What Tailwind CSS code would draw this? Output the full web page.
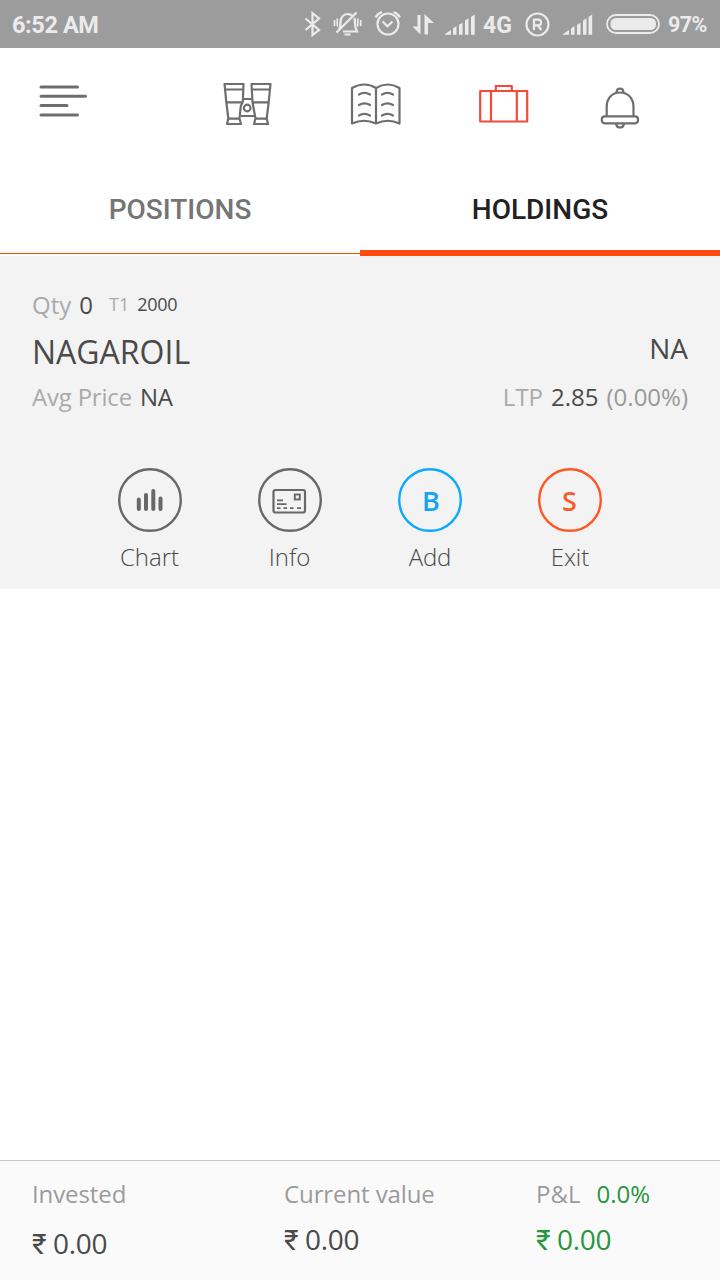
<!DOCTYPE html>
<html lang="en">
<head>
<meta charset="utf-8">
<title>Holdings</title>
<script src="https://cdn.jsdelivr.net/npm/@tailwindcss/browser@4"></script>
</head>
<body class="flex h-[1280px] w-[720px] flex-col overflow-hidden bg-white font-['Open_Sans','Noto_Sans',sans-serif] text-[#4a4a4a]">

<!-- Status bar -->
<header class="flex h-12 shrink-0 items-center justify-between bg-[#9c9c9c] pr-3 pl-3 font-[Roboto,sans-serif] font-bold text-[#ebebeb]">
  <span class="pt-1 text-[23.5px] leading-none tracking-[-0.4px] whitespace-nowrap">6:52 AM</span>
  <svg class="-mr-3 h-12 w-[430px]" viewBox="290 0 430 48" fill="none" stroke="#ebebeb" stroke-width="2.200">
    <path d="M305.500 18.500 319 30l-6.500 5V13l6.500 5.500-13.500 11.500"/>
    <path d="M336.500 32.500 356.500 12.500M339 29.500c1.500-2 1.500-4 1.500-7 0-5 3-8.500 7-8.500 2 0 3.500.6 4.800 1.800M354.300 18c.6 1.500.7 3 .7 5 0 4 .3 5.500 2 8.500h-14M344.500 34.500h6"/>
    <path d="M334.500 20v6M337.300 18.500v8M357.800 18.500v8M360.700 20v6" stroke-width="1.700"/>
    <circle cx="388" cy="24" r="10.500"/>
    <path d="m382.500 21.500 5 4.700 5-4.700"/>
    <path d="M375.500 17.500q2-4 6.500-5.500M400 17.500q-2-4-6.500-5.500"/>
    <path fill="#ebebeb" stroke="none" d="M417.500 15h3v19.500L412.500 26.500h5zM424.500 34.500V14l9.500 9h-6v11.500z"/>
    <path fill="#ebebeb" stroke="none" d="M445 34.700v-.7l6-4v4.700zM453 28.500l3.500-2.500v8.700H453zM459 24.700l3.500-2v12H459zM465 20.500l3.500-2.200v16.400H465zM471 17l3.700-2.500v20.200H471z"/>
    <text x="483" y="33" fill="#ebebeb" stroke="none" font-size="23">4G</text>
    <circle cx="537.500" cy="24.500" r="11"/>
    <path d="M534 30V19.700h4.500q2.500 0 2.500 2.800t-2.500 2.800H534M538 25.500l3.300 4.500"/>
    <path fill="#ebebeb" stroke="none" d="M563 34.700v-.7l6-4v4.700zM571 28.500l3.500-2.500v8.700H571zM577 24.700l3.500-2v12H577zM583 20.500l3.500-2.200v16.400H583zM588.500 17l3.700-2.500v20.200h-3.700z"/>
    <rect x="607" y="15" width="52" height="18" rx="9" stroke-width="1.800"/>
    <rect x="610.500" y="18" width="45.500" height="12" rx="5.500" fill="#ebebeb" stroke="none"/>
    <text x="668" y="32" fill="#ebebeb" stroke="none" font-size="21.500" textLength="39.500">97%</text>
  </svg>
</header>

<!-- Navigation -->
<nav class="h-[112px] shrink-0">
  <svg class="block h-[112px] w-[720px]" viewBox="0 48 720 112" fill="none" stroke="#6e6e6e" stroke-width="2.200" stroke-linejoin="round">
    <path stroke-width="3" stroke-linecap="round" d="M41 87h36.500M41 96.300h44.500M41 105.600h26M41 115h36.500"/>
    <path d="M224.500 84h19l-.7 18-2 4-1.300 12.500 1.500 5.500h-14l1.300-5.500-2-16.500zM224.500 89.500h19M226 102.300h16.500M228.500 118.700h11"/>
    <path d="M251.500 84h19l-1.800 18-2 16.500L268 124h-14l1.500-5.500L252.500 102zM251.500 89.500h19M252.500 102.300h16.500M255.500 118.700h11M243 99h9M241 116h13.500"/>
    <circle cx="247.200" cy="108" r="3.300"/>
    <path d="M376 88q-11.500-7-24 0v35.500q12-5.500 24 0 12-5.500 23.500 0V88q-12-7-23.500 0v35.500"/>
    <path stroke-linecap="round" d="M359 94.500q5.500-3.200 11 0M359 105q5.500-3.200 11 0M359 115.500q5.500-3.200 11 0M382 94.500q5.500-3.200 11 0M382 105q5.500-3.200 11 0M382 115.500q5.500-3.200 11 0"/>
    <path stroke="#f44a3c" d="M480.200 91h47v30.500h-47zM491 91v30.500M516.800 91v30.500M495.800 91v-5h16v5"/>
    <path d="M606.700 116v-9c0-8.500 5.300-14.500 13.300-14.500s13.500 6 13.500 14.500v9M616.500 92.700c0-5.500 7-5.500 7 0M616 123.500c.7 5.300 7.300 5.300 8 0"/>
    <rect x="601.800" y="116.300" width="36.200" height="7" rx="3"/>
  </svg>
</nav>

<!-- Tabs -->
<div class="grid h-24 shrink-0 grid-cols-2 bg-white text-center font-[Roboto,sans-serif] text-[28px] leading-[100px] font-medium">
  <div class="mb-0.5 h-[94px] border-b border-[#ff4a0b] text-[#757575]">POSITIONS</div>
  <div class="h-24 border-b-6 border-[#ff4a0b] text-[#212121]">HOLDINGS</div>
</div>

<!-- Holding -->
<section class="flex h-[333px] shrink-0 flex-col bg-[#f3f3f3] pt-[33px]">
  <div class="flex justify-between px-8">
    <div>
      <div class="flex h-10 items-start text-2xl leading-8 whitespace-nowrap"><span class="text-[#aaa]">Qty</span><span class="ml-2">0</span><span class="ml-4 text-lg leading-[31px] text-[#aaa]">T1</span><span class="ml-2 text-lg leading-[31px] tracking-[-0.3px]">2000</span></div>
      <h1 class="h-[52px] text-[32px] leading-[45px]">NAGAROIL</h1>
      <div class="flex gap-2 text-2xl leading-8 tracking-[-0.2px]"><span class="text-[#aaa]">Avg Price</span><span>NA</span></div>
    </div>
    <div class="flex flex-col items-end pt-10">
      <div class="h-[52px] text-[28px] leading-[38px]">NA</div>
      <div class="flex gap-2 text-2xl leading-8"><span class="text-[#aaa]">LTP</span><span>2.85</span><span class="text-[#999]">(0.00%)</span></div>
    </div>
  </div>
  <div class="mt-[55px] grid grid-cols-4 px-20 text-center text-2xl leading-8 font-light">
    <div class="flex flex-col items-center gap-[9px]">
      <svg class="size-16" viewBox="0 0 64 64" fill="none" stroke="#686868"><circle cx="32" cy="32" r="30.800" stroke-width="2.400"/><path stroke-width="4" stroke-linecap="round" d="M20.800 31.500v9.500M28 27v14M35.300 23v18M42.500 30.500V41"/></svg>
      <span class="pr-px">Chart</span>
    </div>
    <div class="flex flex-col items-center gap-[9px]">
      <svg class="size-16" viewBox="0 0 64 64" fill="none" stroke="#686868"><circle cx="32" cy="32" r="30.800" stroke-width="2.400"/><rect x="15.500" y="22" width="31.500" height="22.500" rx="2" stroke-width="2.200"/><rect x="36.800" y="26.500" width="5" height="5" stroke-width="1.900"/><path stroke-width="1.800" d="M19 32.300h6M19 36.200h9.500M19 40.200h3.500M25.500 40.200H29M32 40.200h3.500M39 40.200h4"/></svg>
      <span class="pr-px">Info</span>
    </div>
    <div class="flex flex-col items-center gap-[9px]">
      <svg class="size-16" viewBox="0 0 64 64"><circle cx="32" cy="32" r="30.800" stroke-width="2.400" fill="none" stroke="#0caaff"/><text x="33" y="42.500" text-anchor="middle" font-size="27" font-weight="600" fill="#17a4ef">B</text></svg>
      <span class="tracking-[-0.2px]">Add</span>
    </div>
    <div class="flex flex-col items-center gap-[9px]">
      <svg class="size-16" viewBox="0 0 64 64"><circle cx="32" cy="32" r="30.800" stroke-width="2.400" fill="none" stroke="#ff5722"/><text x="31.500" y="42.500" text-anchor="middle" font-size="27" font-weight="600" fill="#f45d2e">S</text></svg>
      <span>Exit</span>
    </div>
  </div>
</section>

<main class="flex-1"></main>

<!-- Totals -->
<footer class="flex h-[120px] shrink-0 border-t border-[#c8c8c8] bg-[#fafafa] pt-[17px] pl-8 text-2xl leading-8">
  <div class="w-[252px]"><div class="tracking-[-0.1px] text-[#9b9b9b]">Invested</div><div class="mt-[14px] text-[28px] leading-[38px] tracking-[-0.35px]"><span class="font-[Roboto,sans-serif]">₹</span> 0.00</div></div>
  <div class="w-[252px]"><div class="tracking-[-0.1px] text-[#9b9b9b]">Current value</div><div class="mt-[10px] text-[28px] leading-[38px] tracking-[-0.35px]"><span class="font-[Roboto,sans-serif]">₹</span> 0.00</div></div>
  <div><div class="flex gap-4 text-[#9b9b9b]"><span>P&amp;L</span><span class="text-[#27963c]">0.0%</span></div><div class="mt-[10px] text-[28px] leading-[38px] tracking-[-0.35px] text-[#27963c]"><span class="font-[Roboto,sans-serif]">₹</span> 0.00</div></div>
</footer>
</body>
</html>
